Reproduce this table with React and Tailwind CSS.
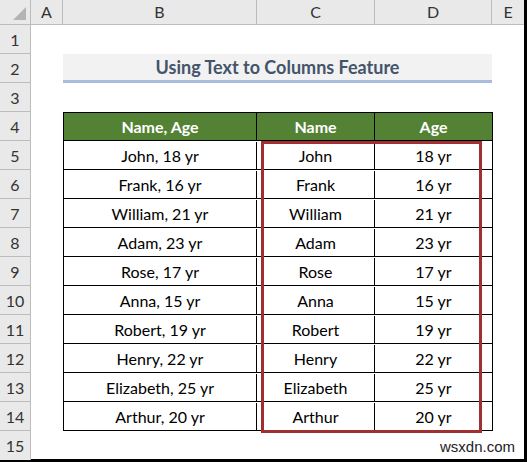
import React from "react";

const rows = [
  ["John, 18 yr", "John", "18 yr"],
  ["Frank, 16 yr", "Frank", "16 yr"],
  ["William, 21 yr", "William", "21 yr"],
  ["Adam, 23 yr", "Adam", "23 yr"],
  ["Rose, 17 yr", "Rose", "17 yr"],
  ["Anna, 15 yr", "Anna", "15 yr"],
  ["Robert, 19 yr", "Robert", "19 yr"],
  ["Henry, 22 yr", "Henry", "22 yr"],
  ["Elizabeth, 25 yr", "Elizabeth", "25 yr"],
  ["Arthur, 20 yr", "Arthur", "20 yr"],
];

const font = { fontFamily: "Lato, 'Open Sans', sans-serif" };

export default function App() {
  const rowNums = Array.from({ length: 15 }, (_, i) => i + 1);
  return (
    <div className="w-[527px] h-[462px] bg-black overflow-hidden" style={font}>
      <div className="w-[524px] h-[459px] bg-white flex flex-col">
        {/* column headers */}
        <div className="flex h-[25px] bg-[#e9e9e9] border-b border-[#bcbcbc] text-[16px] text-[#333]">
          <div className="w-[31px] border-r border-[#bcbcbc] relative">
            <svg className="absolute right-[4px] bottom-[4px]" width="13" height="13" viewBox="0 0 13 13">
              <polygon points="13,0 13,13 0,13" fill="#b4b4b4" />
            </svg>
          </div>
          <div className="w-[32px] border-r border-[#bcbcbc] flex items-center justify-center">A</div>
          <div className="w-[194px] border-r border-[#bcbcbc] flex items-center justify-center">B</div>
          <div className="w-[118px] border-r border-[#bcbcbc] flex items-center justify-center">C</div>
          <div className="w-[117px] border-r border-[#bcbcbc] flex items-center justify-center">D</div>
          <div className="w-[32px] flex items-center justify-center">E</div>
        </div>
        <div className="flex flex-1">
          {/* row headers */}
          <div className="w-[31px] bg-[#e9e9e9] border-r border-[#bcbcbc] flex flex-col text-[16px] text-[#333]">
            {rowNums.map((n) => (
              <div
                key={n}
                className={`h-[29px] flex items-center justify-center pt-[1px] ${n < 15 ? "border-b border-[#bcbcbc]" : ""}`}
              >
                {n}
              </div>
            ))}
          </div>
          {/* sheet */}
          <div className="flex-1 flex flex-col pl-[32px] relative">
            <div className="h-[29px]" />
            <div className="h-[29px] w-[429px] bg-[#f2f2f2] border-b-[3px] border-[#a9bcdc] flex items-center justify-center font-bold text-[18px] text-[#44546a] pt-[1px]">
              Using Text to Columns Feature
            </div>
            <div className="h-[29px]" />
            <div className="w-[430px] border border-black">
              <div className="flex h-[28px] bg-[#548235] text-white font-bold text-[16px] border-b border-black">
                <div className="w-[193px] border-r border-black flex items-center justify-center">Name, Age</div>
                <div className="w-[118px] border-r border-black flex items-center justify-center">Name</div>
                <div className="flex-1 flex items-center justify-center">Age</div>
              </div>
              {rows.map((r, i) => (
                <div
                  key={i}
                  className={`flex pt-[1px] text-[16px] text-black ${i < rows.length - 1 ? "h-[29px] border-b border-black" : "h-[28px]"}`}
                >
                  <div className="w-[193px] border-r border-black flex items-center justify-center">{r[0]}</div>
                  <div className="w-[118px] border-r border-black flex items-center justify-center">{r[1]}</div>
                  <div className="flex-1 flex items-center justify-center">{r[2]}</div>
                </div>
              ))}
            </div>
            <div className="absolute left-[230px] top-[116px] w-[221px] h-[292px] border-[3px] border-[#a0302f]" />
            <div className="absolute right-[9px] bottom-[2px] text-[15px] text-[#222]" style={{ fontFamily: "'Liberation Sans', Arial, sans-serif" }}>
              wsxdn.com
            </div>
          </div>
        </div>
      </div>
    </div>
  );
}
